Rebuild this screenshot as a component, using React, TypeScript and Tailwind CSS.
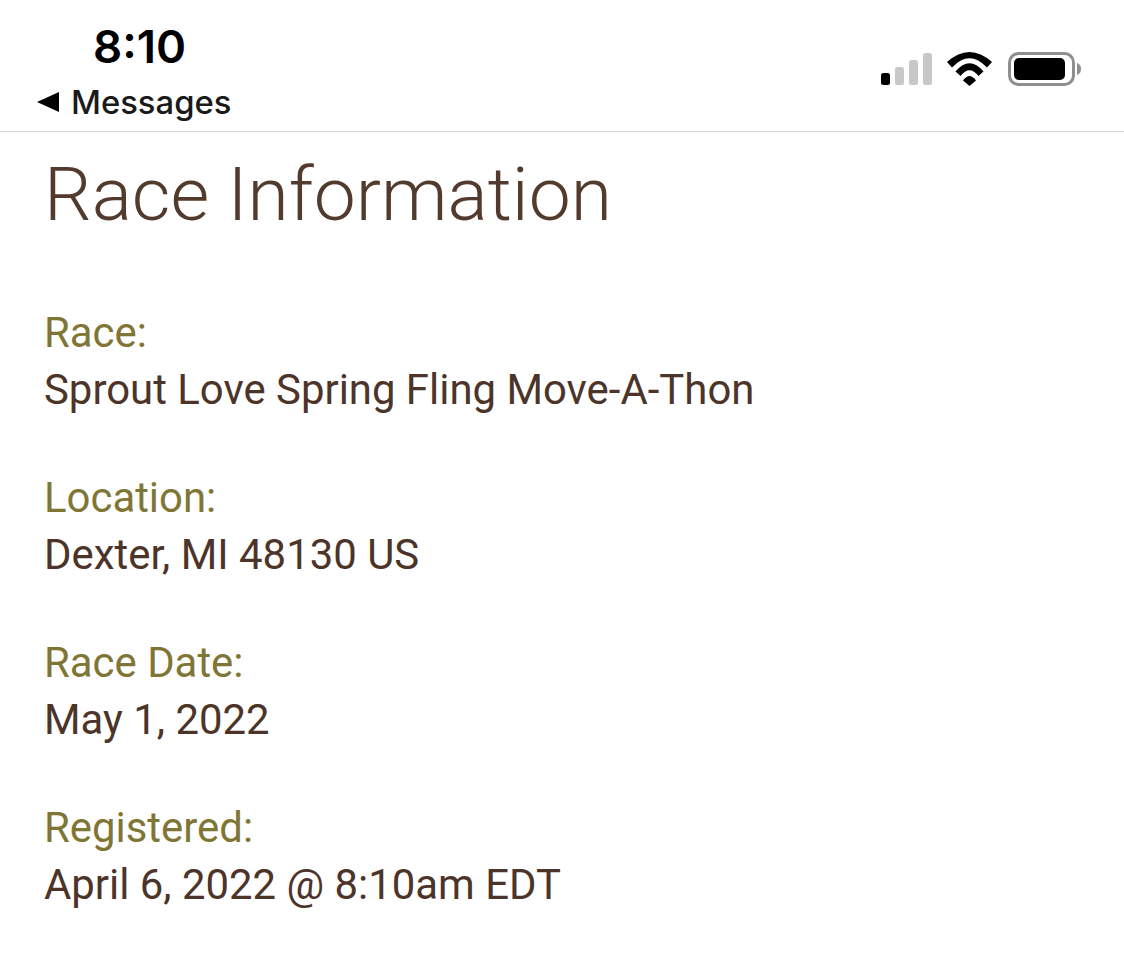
const Field = ({ label, value }: { label: string; value: string }) => (
  <div className="mb-[51px]">
    <div className="text-[41.9px] leading-[57px] text-[#7f7636]">{label}</div>
    <div className="text-[41.9px] leading-[57px] text-[#4d3429]">{value}</div>
  </div>
);

const StatusIcons = () => (
  <svg width="204" height="40" viewBox="0 0 204 40" className="block">
    <rect x="1" y="23" width="9" height="12" rx="2.5" fill="#000" />
    <rect x="15" y="17" width="9" height="18" rx="2.5" fill="#c8c8c8" />
    <rect x="29" y="10" width="9" height="25" rx="2.5" fill="#c8c8c8" />
    <rect x="43" y="3" width="9" height="32" rx="2.5" fill="#c8c8c8" />
    <path d="M67 12Q89.500-8 112 12L107 17.500Q89.500-1 72 17.500Z" fill="#000" />
    <path d="M75.500 21.500Q89.500 5 103.500 21.500L98.500 26Q89.500 14.500 80.500 26Z" fill="#000" />
    <path d="M83 30.500Q89.500 21.500 96 30.500L89.500 36Z" fill="#000" />
    <rect x="129.500" y="3.500" width="64" height="31" rx="9" fill="none" stroke="#8f8f8f" strokeWidth="3" />
    <rect x="134" y="8" width="51" height="22" rx="5" fill="#000" />
    <path d="M197 13c3 1 4 3 4 6s-1 5-4 6z" fill="#8f8f8f" />
  </svg>
);

export default function App() {
  return (
    <div className="h-[968px] w-[1124px] overflow-hidden bg-white font-['Roboto',sans-serif]">
      <div className="flex h-[132px] items-start justify-between border-b border-[#d4d4d4] pl-[37px] pr-[40px]">
        <div className="flex flex-col">
          <div className="ml-[56px] mt-[21px] text-[45.600px] leading-[52px] font-semibold text-black font-['Inter',sans-serif]">8:10</div>
          <div className="mt-[9px] flex items-center gap-[12px]">
            <svg width="22" height="20" viewBox="0 0 22 20"><path d="M0 10 22 0v20z" fill="#000" /></svg>
            <span className="text-[32.800px] leading-[40px] font-medium text-[#1a1a1a] font-['Inter',sans-serif]">Messages</span>
          </div>
        </div>
        <div className="mt-[50px]"><StatusIcons /></div>
      </div>
      <div className="pl-[44px]">
        <h1 className="mt-[18px] mb-[66px] text-[75px] leading-[88px] font-light text-[#523a2d]">Race Information</h1>
        <Field label="Race:" value="Sprout Love Spring Fling Move-A-Thon" />
        <Field label="Location:" value="Dexter, MI 48130 US" />
        <Field label="Race Date:" value="May 1, 2022" />
        <Field label="Registered:" value="April 6, 2022 @ 8:10am EDT" />
      </div>
    </div>
  );
}
